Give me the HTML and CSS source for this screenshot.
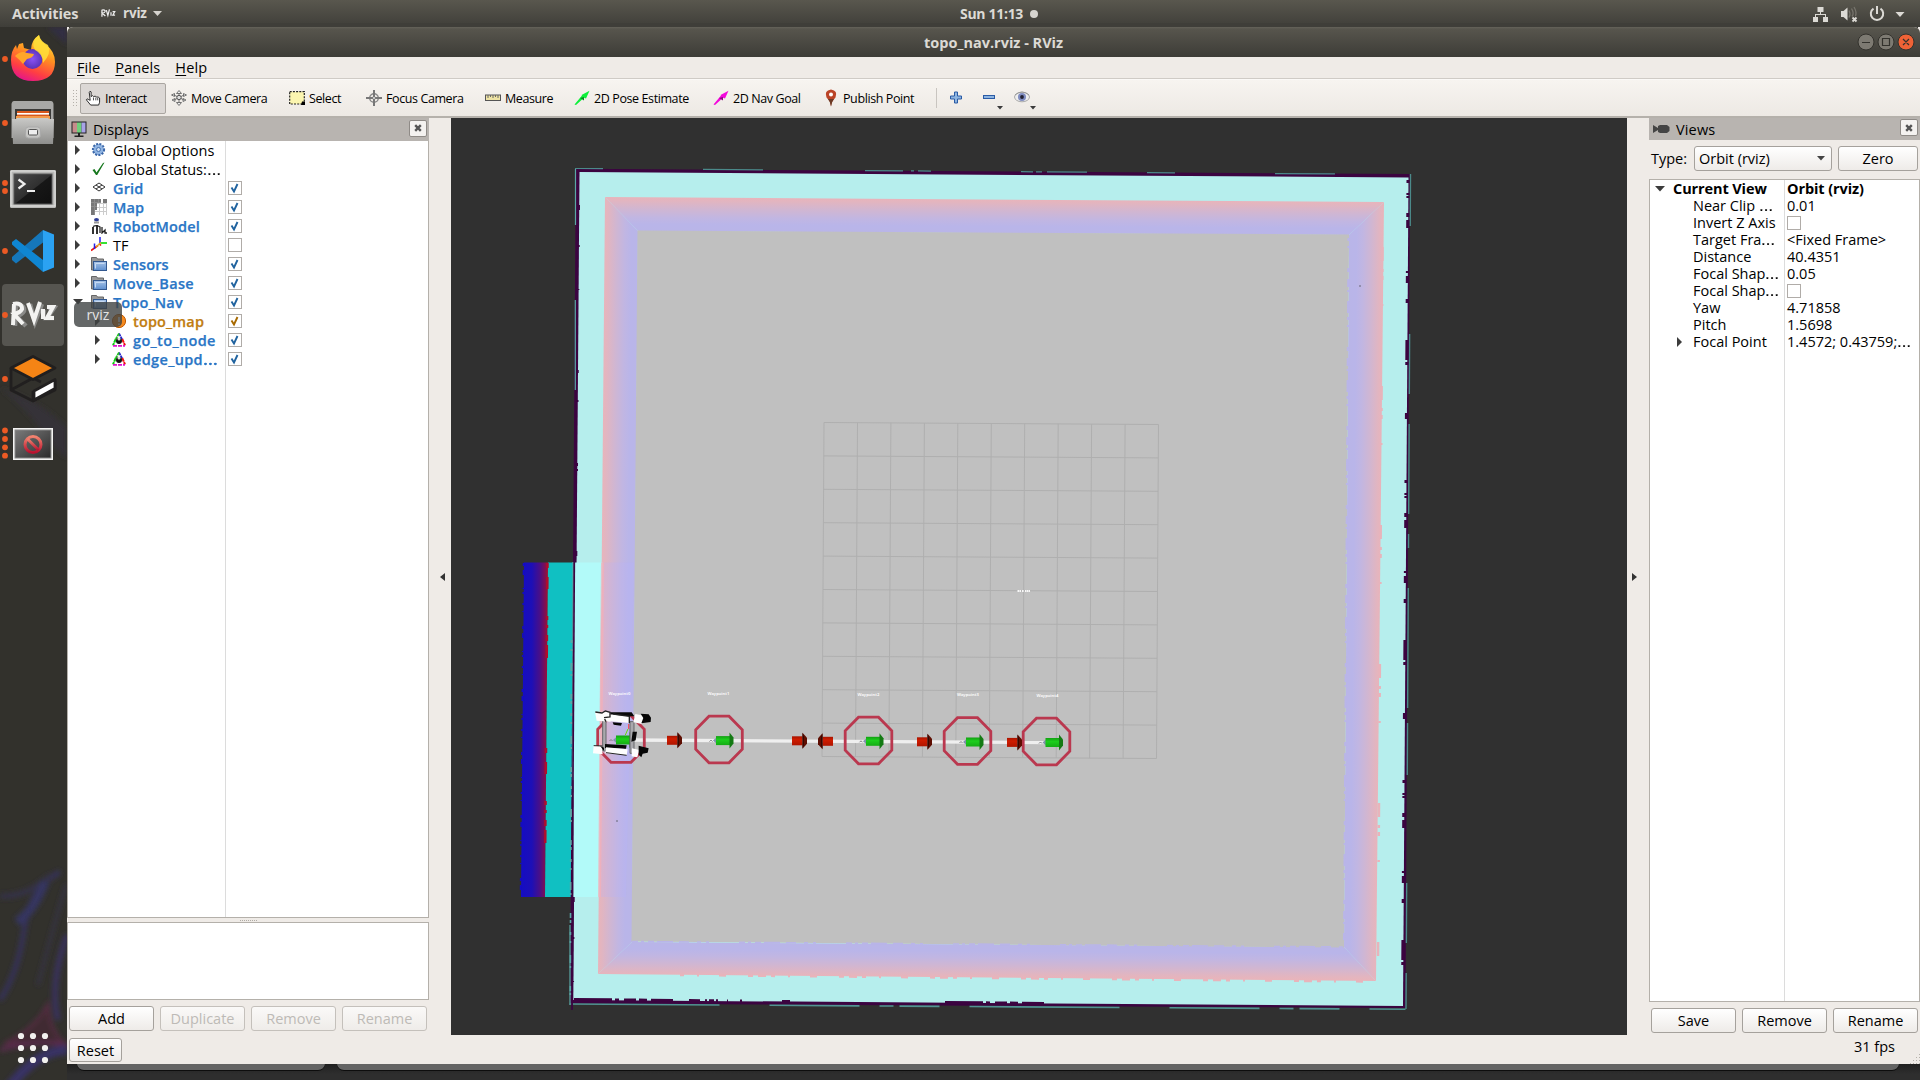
FILE: index.html
```html
<!DOCTYPE html>
<html lang="en">
<head>
<meta charset="utf-8">
<title>topo_nav.rviz - RViz</title>
<link rel="stylesheet" href="styles.css">
</head>
<body>
<svg class="defs" width="0" height="0">
  <defs>
    <linearGradient id="gFolder" x1="0" y1="0" x2="0" y2="1"><stop offset="0" stop-color="#a9c5e8"/><stop offset="1" stop-color="#5e8fcf"/></linearGradient>
    <symbol id="folder" viewBox="0 0 16 16"><path d="M.5 14V1.500h5l1 1.500h6v11z" fill="#999" stroke="#666"/><rect x="2.500" y="5.500" width="13" height="9" fill="url(#gFolder)" stroke="#33588f"/><path d="M4.500 12.500v-5h9" fill="none" stroke="#c8daf2"/></symbol>
    <symbol id="right" viewBox="0 0 6 10"><path d="M0 0l5 5-5 5z" fill="#3c3c3c"/></symbol>
    <symbol id="down" viewBox="0 0 10 6"><path d="M0 0h10L5 5.500z" fill="#3c3c3c"/></symbol>
    <symbol id="tick" viewBox="0 0 14 14"><path d="M3.500 6.500L6 10.500 9.500 3" fill="none" stroke="currentColor" stroke-width="1.900"/></symbol>
    <symbol id="marker" viewBox="0 0 14 14"><path d="M7 .5l3.200 6" stroke="#22c" stroke-width="1.800" stroke-dasharray="3 .6"/><path d="M7 .5L3.800 6" stroke="#2b2" stroke-width="1.800" stroke-dasharray="3 .6"/><path d="M3.800 6L1 12.500" stroke="#1c1" stroke-width="2" stroke-dasharray="4 .6"/><path d="M10.200 6l2.800 6.500" stroke="#e11" stroke-width="2" stroke-dasharray="4 .6"/><path d="M1 12.800h12" stroke="#d1c" stroke-width="1.800" stroke-dasharray="4 1"/><circle cx="7" cy="8" r="3" fill="#111"/><circle cx="7" cy="6" r="1.500" fill="#ddd"/></symbol>
    <symbol id="cross" viewBox="0 0 8 8"><path d="M1.200 1.200l5.600 5.600M6.800 1.200L1.200 6.800" stroke="#555" stroke-width="2.400"/></symbol>
  </defs>
</svg>

<header class="topbar">
  <span class="activities">Activities</span>
  <svg class="rv-mini" viewBox="0 0 48 30" aria-hidden="true"><g fill="none" stroke="#eee" stroke-width="4"><path d="M3 3v22M3 4q11-2 10 5-1 4-9 5l10 9M17 4l5 17 5-19M32 11v11M37 9h7l-6 11h7"/></g></svg>
  <span class="appname">rviz</span>
  <svg class="tri-top" viewBox="0 0 9 5"><path d="M0 0h9L4.500 5z" fill="#d6d3ce"/></svg>
  <span class="clock">Sun 11:13<i></i></span>
  <svg class="tray" width="100" height="18" viewBox="1810 4 100 18">
    <g fill="#dcdad5"><rect x="1817.500" y="6" width="6" height="5"/><rect x="1813" y="16" width="5" height="5"/><rect x="1823" y="16" width="5" height="5"/><path d="M1820 11h1v2h5v3h-1v-2h-9v2h-1v-3h5z"/>
    <path d="M1841 10h2.500l4-3.500v13l-4-3.500h-2.500z"/></g>
    <path d="M1849 9.500q2 3.500 0 7M1851.500 7.500q3 5 .5 8M1854 6q3 5 1.500 9" stroke="#77746c" stroke-width="1.300" fill="none"/>
    <path d="M1852.500 16.500l4 4M1856.500 16.500l-4 4" stroke="#dcdad5" stroke-width="1.800"/>
    <path d="M1873.500 7.600a6.200 6.200 0 1 0 7 0" stroke="#dcdad5" stroke-width="2" fill="none"/><path d="M1877 5v8" stroke="#dcdad5" stroke-width="2"/>
    <path d="M1895.500 11h9l-4.500 5z" fill="#dcdad5"/>
  </svg>
</header>

<div class="desktop">
<nav class="dock">
  <svg width="67" height="1053" viewBox="0 27 67 1053">
    <defs>
      <linearGradient id="ff" x1=".7" y1="0" x2=".3" y2="1"><stop offset="0" stop-color="#ffe93c"/><stop offset=".4" stop-color="#ff9320"/><stop offset=".75" stop-color="#ff3f42"/><stop offset="1" stop-color="#e3148d"/></linearGradient>
      <radialGradient id="globe"><stop offset="0" stop-color="#8a52f5"/><stop offset="1" stop-color="#5a33b8"/></radialGradient>
      <linearGradient id="steel" x1="0" y1="0" x2="0" y2="1"><stop offset="0" stop-color="#c9c9c7"/><stop offset="1" stop-color="#8e8e8c"/></linearGradient>
      <linearGradient id="scr" x1="0" y1="0" x2="1" y2="1"><stop offset="0" stop-color="#7a7a7a"/><stop offset="1" stop-color="#2b2b2b"/></linearGradient>
      <linearGradient id="term" x1="0" y1="0" x2="1" y2="1"><stop offset="0" stop-color="#4a4a4a"/><stop offset=".5" stop-color="#303030"/><stop offset=".52" stop-color="#171717"/><stop offset="1" stop-color="#101010"/></linearGradient>
      <linearGradient id="no" x1="0" y1="0" x2="0" y2="1"><stop offset="0" stop-color="#f2836f"/><stop offset="1" stop-color="#b8122f"/></linearGradient>
      <filter id="soft" x="-50%" y="-50%" width="200%" height="200%"><feGaussianBlur stdDeviation="2.500"/></filter>
    </defs>
    <g filter="url(#soft)" fill="none">
      <path d="M0 388q25 18 55 60l12 10v-30Q40 400 0 388z" fill="#343237" stroke="none"/>
      <path d="M47 27l20 18v-18z" fill="#312f42" stroke="none"/>
      <path d="M60 872q-30 15-36 58T0 1000" stroke="#35325a" stroke-width="5"/>
      <path d="M0 896q25 2 50-20" stroke="#343248" stroke-width="5"/>
      <path d="M45 882q-12 30-28 40" stroke="#343560" stroke-width="9"/>
      <path d="M66 885q-12 40-28 100" stroke="#353247" stroke-width="3"/><path d="M67 935q-18 50-9 85" stroke="#38305c" stroke-width="6"/>
      <path d="M48 1004q-14 26-44 40 30-4 63 2-18-15-19-42z" fill="#412b31" stroke="#5a2c46" stroke-width="2.500"/>
      <path d="M67 1044q-30-4-67 6" stroke="#5a2c4e" stroke-width="4"/>
      <path d="M67 1050q-30 0-60 40" stroke="#373265" stroke-width="10"/>
    </g>
    <rect x="2" y="284" width="62" height="62" rx="4" fill="#565550"/>
    <g fill="#ec5a24"><circle cx="5" cy="59" r="2.900"/><circle cx="5" cy="123" r="2.900"/><circle cx="5" cy="183" r="2.900"/><circle cx="5" cy="191" r="2.900"/><circle cx="5" cy="251" r="2.900"/><circle cx="5" cy="315" r="2.900"/><circle cx="5" cy="379" r="2.900"/><circle cx="5" cy="430.500" r="2.900"/><circle cx="5" cy="439" r="2.900"/><circle cx="5" cy="447.300" r="2.900"/><circle cx="5" cy="455.700" r="2.900"/></g>
    <!-- Firefox -->
    <path d="M39 35q1 6 6 9 10 7 10 18 0 19-22 19T11 60q0-9 5-15l1 4 2-5 4-1 1 5 7 2q0-10 8-15z" fill="url(#ff)"/>
    <circle cx="32.500" cy="59" r="10" fill="url(#globe)"/>
    <path d="M15 56q6-6 12-3l7 1q-1 4-7 5l-4 5q-4-5-8-8z" fill="#ffa62a"/>
    <path d="M39 35q-9 7-4 15 8 4 8 13 9-10 5-18-8-4-9-10z" fill="#ffdf3a" opacity=".85"/>
    <!-- Files -->
    <path d="M14 101h37q2 0 2.500 3v34h-42v-34q.5-3 2.500-3z" fill="#a8a8a6"/>
    <rect x="15" y="109" width="36" height="12" fill="#3b3a38"/><path d="M17 111h32v7H17z" fill="#d8571c"/><path d="M17 113h32v1.600H17z" fill="#fff"/><path d="M16 116h34v3H16z" fill="#f39a4a"/>
    <path d="M12 119h4l1-1h31l1 1h5l-1 25H13z" fill="url(#steel)"/>
    <rect x="25.500" y="127" width="15" height="11" rx="3" fill="#c6c6c4" stroke="#aaa"/><rect x="28.500" y="129.500" width="9" height="5.500" rx="1" fill="#eee" stroke="#555"/>
    <!-- Terminal -->
    <rect x="10" y="170" width="46" height="38" rx="1.500" fill="#b8b8b6"/><rect x="11" y="171" width="44" height="35" fill="none" stroke="#e4e4e2"/><rect x="14" y="174" width="38" height="30" fill="url(#term)" stroke="#555"/>
    <path d="M18.500 179.500l6 4.500-6 4.500" stroke="#eee" stroke-width="2.200" fill="none"/><path d="M27 191h8" stroke="#eee" stroke-width="2"/>
    <!-- VS Code -->
    <path d="M12 260l4 3.500 27-21V230L12 257z" fill="#1577bb"/><path d="M12 242l4-3 27 21v12L12 244.500z" fill="#0f86d3"/>
    <path d="M43 230l11 4.500v33L43 272z" fill="#2ba2f2"/>
    <!-- RViz -->
    <g fill="none" stroke="#8a8a88" stroke-width="4.500"><path d="M16 306l-1 20M15 305q10-1 9 6-2 4-8 5l10 10M30 304l5 18 7-18M44 310l-1 9M48 308h6l-7 10h7"/></g>
    <g fill="none" stroke="#f3f3f1" stroke-width="4"><path d="M14 304l-1 21M13 304q9-2 9 5-2 4-8 5l9 10M28 303l6 17 6-18M43 309v10M47 307h6l-6 11h7"/></g>
    <!-- Gazebo -->
    <g stroke="#211f1f" stroke-width="2.800" stroke-linejoin="round"><path d="M11 368v22l22 11 22-11v-10M11 390l22-12 8 4M33 401v-10" fill="none"/><path d="M11 368l22-11.500L55 368l-22 11.500z" fill="#f58415"/><path d="M34 391l21-11.500v9L34 400z" fill="#fff"/></g>
    <!-- Display blocked -->
    <rect x="13" y="428" width="40" height="32" fill="#f4f4f3"/><rect x="15" y="430" width="36" height="28" fill="url(#scr)" stroke="#888"/><g fill="none" stroke="url(#no)" stroke-width="3"><circle cx="33" cy="444.500" r="8"/><path d="M27.500 439l11 11"/></g>
    <g fill="#f2f1ef"><circle cx="21" cy="1036" r="3.100"/><circle cx="33" cy="1036" r="3.100"/><circle cx="45" cy="1036" r="3.100"/><circle cx="21" cy="1048" r="3.100"/><circle cx="33" cy="1048" r="3.100"/><circle cx="45" cy="1048" r="3.100"/><circle cx="21" cy="1060" r="3.100"/><circle cx="33" cy="1060" r="3.100"/><circle cx="45" cy="1060" r="3.100"/></g>
  </svg>
</nav>

<div class="stage">
<main class="window">
  <div class="titlebar"><span class="title">topo_nav.rviz - RViz</span>
    <svg class="winbtns" width="58" height="20" viewBox="1857 32 58 20"><g fill="#7d7a72" stroke="#33322d"><circle cx="1866" cy="42" r="8"/><circle cx="1886" cy="42" r="8"/><circle cx="1906" cy="42" r="8" fill="#ef6236"/></g><path d="M1862 42.500h8M1882.500 38.500h7v7h-7zM1903 39l6 6M1909 39l-6 6" fill="none" stroke="#33322d" stroke-width="1.200"/></svg>
  </div>
  <div class="menubar"><span><u>F</u>ile</span><span><u>P</u>anels</span><span><u>H</u>elp</span></div>
  <div class="toolbar">
    <i class="grip"></i>
    <div class="tool active t1"><svg viewBox="0 0 16 17"><path d="M5 11L4 2.500Q4.500.5 6 2v5l1.500-1 1 1 2-.5 1 1 2 0 1.500 1V13l-1 3H5.500L1 10.500q.5-2 2-.5z" fill="#fff" stroke="#222"/><path d="M8.500 8v3M11 8v3M13 8.500V11" stroke="#333" stroke-width=".9"/></svg><span>Interact</span></div>
    <div class="tool t2"><svg viewBox="0 0 16 16"><path d="M8 .5l2.500 3h-5zM8 15.500l2.500-3h-5zM.5 5l3-1.500v3zM15.500 5l-3-1.500v3zM1 10l3-1.500v3zM15 10l-3-1.500v3zM8 3v10M3 5l10 5M13 5L3 10" fill="#eee" stroke="#666" stroke-width=".9"/><circle cx="8" cy="7.500" r="2.200" fill="#ddd" stroke="#555"/></svg><span>Move Camera</span></div>
    <div class="tool t3"><svg viewBox="0 0 16 14"><rect x=".7" y=".7" width="14.600" height="12.300" fill="#fbf5b0" stroke="#222" stroke-width="1.200" stroke-dasharray="2 1.200"/><path d="M13 10.500h3V14h-4z"/></svg><span>Select</span></div>
    <div class="tool t4"><svg viewBox="0 0 16 16"><circle cx="8" cy="8" r="4.300" fill="none" stroke="#888" stroke-width="1.400"/><path d="M8 0v6M8 10v6M0 8h6M10 8h6" stroke="#777" stroke-width="2"/><circle cx="8" cy="8" r="1.500" fill="#eee" stroke="#666"/></svg><span>Focus Camera</span></div>
    <div class="tool t5"><svg viewBox="0 0 16 16"><rect x=".5" y="5" width="15" height="5.500" fill="#eee3a4" stroke="#555"/><path d="M3 5v3M5.500 5v2M8 5v3M10.500 5v2M13 5v3" stroke="#666"/></svg><span>Measure</span></div>
    <div class="tool t6"><svg viewBox="0 0 16 16"><path d="M.5 14.500L8 5.500l-.5-.5L15.500.8 12 8.500l-2-.8L2 15z" fill="#0ef03a"/><path d="M6 8l4 2.500V7z" fill="#0a8a24"/></svg><span>2D Pose Estimate</span></div>
    <div class="tool t7"><svg viewBox="0 0 16 16"><path d="M.5 14.500L8 5.500l-.5-.5L15.500.8 12 8.500l-2-.8L2 15z" fill="#f407dc"/><path d="M6 8l4 2.500V7z" fill="#8c0a80"/></svg><span>2D Nav Goal</span></div>
    <div class="tool t8"><svg viewBox="0 0 16 18"><path d="M8 17.500Q7.500 12 3.500 8.500.8 1.500 8 .5q7.200 1 4.500 8Q8.500 12 8 17.500z" fill="#bb4427"/><path d="M8 17.500Q7.500 13 5 10h6Q8.500 13 8 17.500z" fill="#6b3a25"/><circle cx="8" cy="5.500" r="2" fill="#fff"/></svg><span>Publish Point</span></div>
    <i class="sep"></i>
    <svg class="extras" width="100" height="26" viewBox="945 86 100 26">
      <path d="M954.500 93h3v4h4v3h-4v4h-3v-4h-4v-3h4z" fill="#8db4e0" stroke="#2a5ba5"/>
      <rect x="983.500" y="96.500" width="11" height="3" fill="#8db4e0" stroke="#2a5ba5"/>
      <path d="M997 107h6l-3 3.500zM1030 107h6l-3 3.500z" fill="#3b3b3b"/>
      <ellipse cx="1022" cy="98" rx="7.500" ry="4.800" fill="#eee" stroke="#aaa"/><circle cx="1022" cy="98" r="4" fill="#7f8cc0"/><circle cx="1022" cy="98" r="1.900" fill="#223"/><path d="M1015 96q7-6 14 0" fill="none" stroke="#999"/>
    </svg>
  </div>

  <div class="content">
    <section class="displays">
      <div class="dockhead"><svg width="16" height="17" viewBox="0 0 16 17"><rect x=".5" y=".5" width="15" height="12" fill="#222"/><path d="M1.500 1.500h4.500v10H1.500z" fill="#c58c8c"/><path d="M6 1.500h4.500v10H6z" fill="#6fcf7b"/><path d="M10.500 1.500h4v10h-4z" fill="#a8a2e8"/><path d="M7 12h2v2.500h3.500V16h-9v-1.500H7z" fill="#222"/></svg><span class="dtitle">Displays</span><b class="close"><svg width="8" height="8"><use href="#cross"/></svg></b></div>
      <div class="tree">
        <div class="row"><svg class="ar"><use href="#right"/></svg><svg class="ic" viewBox="0 0 16 16"><circle cx="7.500" cy="7.500" r="5.400" fill="#86aede" stroke="#3a66a8" stroke-width="2.400" stroke-dasharray="2 1.200"/><circle cx="7.500" cy="7.500" r="4.600" fill="#90b4e2"/><circle cx="7.500" cy="7.500" r="2" fill="#cfe0f4" stroke="#4672b0"/></svg><span>Global Options</span></div>
        <div class="row"><svg class="ar"><use href="#right"/></svg><svg class="ic" viewBox="0 0 16 16"><path d="M1.500 9l2-1 2 3.500L12 2l1.500-.5L6.200 14H5z" fill="#15771d"/></svg><span>Global Status:<q>…</q></span></div>
        <div class="row on"><svg class="ar"><use href="#right"/></svg><svg class="ic" viewBox="0 0 16 16"><path d="M8 3l6 4-6 4-6-4zM5 5l6 4M11 5L5 9" fill="none" stroke="#333"/></svg><span>Grid</span><b class="cb"><svg><use href="#tick"/></svg></b></div>
        <div class="row on"><svg class="ar"><use href="#right"/></svg><svg class="ic" viewBox="0 0 16 16"><path d="M0 0h10v4H6v7H4v5H0z" fill="#777"/><path d="M12 0h4v5h-4z" fill="#777"/><path d="M6 4.500h10M6 8.500h10M4 12.500h12M8.500 4v12M12.500 4v12M15.500 4v12" stroke="#ccc" fill="none"/><path d="M0 3.500h10M0 7.500h6M3.500 0v16M7.500 0v4" stroke="#8c8c8c"/></svg><span>Map</span><b class="cb"><svg><use href="#tick"/></svg></b></div>
        <div class="row on"><svg class="ar"><use href="#right"/></svg><svg class="ic" viewBox="0 0 16 16"><ellipse cx="5.500" cy="1.700" rx="2.500" ry="1.700" fill="#2e3c94"/><path d="M3 3.500h5v2H3z" fill="#999"/><path d="M1 9h2v7H1zM5 7h2v9H5z" fill="#333"/><path d="M2 8.500q4-2 7 .5v6M11 9v6l3-3v3h2" fill="none" stroke="#222" stroke-width="1.300"/></svg><span>RobotModel</span><b class="cb"><svg><use href="#tick"/></svg></b></div>
        <div class="row"><svg class="ar"><use href="#right"/></svg><svg class="ic" viewBox="0 0 16 16"><path d="M0 13.500L7 8.500M8 6.500l2 2" stroke="#e11" stroke-width="1.700"/><path d="M9 0v6M3.500 6.500V12" stroke="#22e" stroke-width="1.500"/><path d="M9.500 6H16" stroke="#1d1" stroke-width="1.700"/><path d="M5 10l5-4.500" stroke="#da2" stroke-width="1.400"/></svg><span>TF</span><b class="cb"></b></div>
        <div class="row on"><svg class="ar"><use href="#right"/></svg><svg class="ic"><use href="#folder"/></svg><span>Sensors</span><b class="cb"><svg><use href="#tick"/></svg></b></div>
        <div class="row on"><svg class="ar"><use href="#right"/></svg><svg class="ic"><use href="#folder"/></svg><span class="wide">Move_Base</span><b class="cb"><svg><use href="#tick"/></svg></b></div>
        <div class="row on"><svg class="ar dn"><use href="#down"/></svg><svg class="ic"><use href="#folder"/></svg><span>Topo_Nav</span><b class="cb"><svg><use href="#tick"/></svg></b></div>
        <div class="row on sub warn"><svg class="ar"><use href="#right"/></svg><svg class="ic" viewBox="0 0 14 14"><circle cx="7" cy="7" r="6.600" fill="#f58a1f" stroke="#c05a00"/><path d="M7 3v5M7 9.500V11" stroke="#fff" stroke-width="2"/></svg><span>topo_map</span><b class="cb"><svg><use href="#tick"/></svg></b></div>
        <div class="row on sub"><svg class="ar"><use href="#right"/></svg><svg class="ic"><use href="#marker"/></svg><span class="wide">go_to_node</span><b class="cb"><svg><use href="#tick"/></svg></b></div>
        <div class="row on sub"><svg class="ar"><use href="#right"/></svg><svg class="ic"><use href="#marker"/></svg><span class="wide">edge_upd<q>…</q></span><b class="cb"><svg><use href="#tick"/></svg></b></div>
      </div>
      <div class="split"><i></i></div>
      <div class="desc"></div>
      <div class="btnrow"><button>Add</button><button disabled>Duplicate</button><button disabled>Remove</button><button disabled>Rename</button></div>
    </section>
    <div class="gutter"><svg width="5" height="8" viewBox="0 0 5 8"><path d="M5 0v8L0 4z" fill="#333"/></svg></div>

    <svg class="view" width="1176" height="917" viewBox="451 118 1176 917">
      <defs>
        <linearGradient id="wl" gradientUnits="userSpaceOnUse" x1="601.500" y1="585" x2="635" y2="585.300"><stop offset="0" stop-color="#e8b4bb"/><stop offset=".1" stop-color="#e2b5c0"/><stop offset=".35" stop-color="#d0b6d2"/><stop offset=".6" stop-color="#c1b6e2"/><stop offset=".8" stop-color="#b9b5e9"/><stop offset="1" stop-color="#b9b5e8"/></linearGradient>
        <linearGradient id="wt" x1="994" y1="199.500" x2="993.800" y2="233" href="#wl"/>
        <linearGradient id="wr" x1="1380" y1="591.500" x2="1346.500" y2="591.200" href="#wl"/>
        <linearGradient id="wb" x1="987" y1="977.500" x2="987.200" y2="944.500" href="#wl"/>
        <linearGradient id="cost" x1="0" x2="1" y1="0" y2="0"><stop offset="0" stop-color="#140cc4"/><stop offset=".4" stop-color="#1d0fb6"/><stop offset=".7" stop-color="#4a0f86"/><stop offset=".9" stop-color="#800f50"/><stop offset="1" stop-color="#ae0c2c"/></linearGradient>
        <linearGradient id="red" x1="0" y1="0" x2="0" y2="1"><stop offset="0" stop-color="#a81400"/><stop offset=".35" stop-color="#cf1c00"/><stop offset="1" stop-color="#b01500"/></linearGradient>
        <linearGradient id="grn" x1="0" y1="0" x2="0" y2="1"><stop offset="0" stop-color="#12a012"/><stop offset=".4" stop-color="#1dce1d"/><stop offset="1" stop-color="#15ac15"/></linearGradient>
        <g id="ra"><rect x="0" y="-4.500" width="10.500" height="9" fill="url(#red)"/><path d="M10.500-8v16l4.500-5v-6z" fill="#5e0e02"/><path d="M10.500-8l1.500 4v8l-1.500 4z" fill="#350600"/></g>
        <g id="ga"><path d="M-7.500 1l1.500-1.500 1.500 1.500" fill="none" stroke="#777" stroke-width=".9"/><path d="M-4 0l4-3.500v7z" fill="#8292ad"/><rect x="-1" y="-4.500" width="14" height="9" fill="url(#grn)"/><path d="M12.500-8v16l4-5v-6z" fill="#147a14"/></g>
        <path id="oct" d="M-10-23.300h20l13.300 13.500v19.600L10 23.300h-20l-13.300-13.500v-19.600z" fill="none" stroke="#ba384f" stroke-width="2.800"/>
      </defs>
      <rect x="451" y="118" width="1176" height="917" fill="#303030"/>
      <!-- local costmap outside the map -->
      <path d="M524 562.500h24L545 897h-24z" fill="url(#cost)"/>
      <path d="M548 562.500h26L571 897h-26z" fill="#10c0c2"/>
      <path d="M547.500 563L544.800 897" stroke="#b00c2c" stroke-width="2.500" stroke-dasharray="5 9 12 27 4 5 3 7 6 4 13 90"/>
      <path d="M523.500 563L520.500 897" stroke="#140cc4" stroke-width="1.500" stroke-dasharray="3 4 5 13 1 3 2 9 2 6 1 14"/>
      <!-- static map walls -->
      <path d="M575.800 168.800L1410 174l-4.500 834L570 1003.500z" fill="#3b0440"/>
      <path d="M579.500 172L1408.500 177.500 1403 1006 573.300 1000z" fill="#b6eeed"/>
      <path d="M575.500 169v56M575.300 300v90M573 562v340M570 925v80" stroke="#5aa7a6" stroke-width="1.200" fill="none"/>
      <path d="M575 168.500L1410 174.500" stroke="#4b8a8a" stroke-width="1.200" stroke-dasharray="28 100 60 102 38 8 3 4 13 90 12 3 6 5 40 60"/>
      <path d="M1410.500 174L1406 1009" stroke="#4b8a8a" stroke-width="1.400" stroke-dasharray="52 108 60 30 90 20 14 40 120 15"/>
      <path d="M569.500 1004L1405.500 1009.300" stroke="#519392" stroke-width="1.600" stroke-dasharray="150 50 90 20 14 6 40 30"/>
      <path d="M1408 180L1402.500 1004" stroke="#3b0440" stroke-width="3" stroke-dasharray="3 10 2 1 2 15 4 3 8 43 2 3 7 16 4 37 20 2 3 48 6 61"/>
      <path d="M574 999.500L790 1001.500M945 1002.500l110 1" stroke="#3b0440" stroke-width="3" stroke-dasharray="38 3 4 5 12 3 8 4 22 16 11 5 2 2 5 2 2 9 1 12 2 40"/>
      <path d="M579 205L573 990" stroke="#3b0440" stroke-width="2" stroke-dasharray="5 35 2 42 1 80 3 27 2 61 3 3 2 80"/>
      <path d="M571.500 640L570.500 995" stroke="#5aa7a6" stroke-width="2" stroke-dasharray="3 6 2 12 8 3 2 18 5 2 3 9"/>
      <path d="M605 197L638 231 632 942 598 974z" fill="url(#wl)"/>
      <path d="M605 197L1384 202 1349 235 638 231z" fill="url(#wt)"/>
      <path d="M1384 202L1376 981 1344 947 1349 235z" fill="url(#wr)"/>
      <path d="M598 974L1376 981 1344 947 632 942z" fill="url(#wb)"/>
      <path d="M637.500 230.500L1349 234.500 1344 947.500 631.500 941.500z" fill="#c0c0c0"/>
      <path d="M1348.500 238L1344 940" stroke="#b9b5e8" stroke-width="2" stroke-dasharray="3 5 2 20 4 7 8 3 2 9 12 4"/>
      <path d="M632 941.500L1344 947" stroke="#b9b5e8" stroke-width="1.600" stroke-dasharray="6 3 3 4 6 3 16 6 10 8 4 5 3 30"/>
      <path d="M680 975L1370 981.500" stroke="#e8b4bb" stroke-width="2.500" stroke-dasharray="4 13 2 20 7 22 5 5 8 5"/>
      <path d="M1382.500 247L1378 960" stroke="#e8b4bb" stroke-width="2.500" stroke-dasharray="14 8 3 4 4 24 2 80"/>
      <!-- local costmap laid over the wall -->
      <path d="M574 562.500h28.500L600 660 599.300 897H572z" fill="#b2faf9"/>
      <path d="M602.500 562.500H634L626 897h-26.700L600 660z" fill="#b8b0ff" opacity=".22"/>
      <path d="M602.500 562.500L599.500 897" stroke="#f6b0b8" stroke-width="3" opacity=".7"/>
      <path d="M574.500 540L573 780" stroke="#3b0440" stroke-width="1.600"/><path d="M573 780l-1 230" stroke="#3b0440" stroke-width="1.800"/>
      <path d="M1360 285v2M616 821h2" stroke="#667" fill="none"/>
      <!-- grid -->
      <g stroke="#afafaf" fill="none" stroke-width="1">
        <path d="M824 422.500L1158.500 424.500M823.800 455.900L1158.300 457.900M823.600 489.300L1158.100 491.300M823.400 522.700L1157.900 524.700M823.200 556.100L1157.700 558.100M823 589.500L1157.500 591.500M822.800 622.900L1157.300 624.900M822.600 656.300L1157.100 658.300M822.400 689.700L1156.900 691.700M822.200 723.100L1156.700 725.100M822 756.500L1156.500 758.500"/>
        <path d="M824 422.500L822 756.500M857.500 422.700L855.500 756.700M890.900 422.900L888.900 756.900M924.400 423.100L922.400 757.100M957.800 423.300L955.800 757.300M991.300 423.500L989.300 757.500M1024.700 423.700L1022.700 757.700M1058.200 423.900L1056.200 757.900M1091.600 424.100L1089.600 758.100M1125.100 424.300L1123.100 758.300M1158.500 424.500L1156.500 758.500"/>
      </g>
      <path d="M1017.500 591h3.500M1022 591h2M1025 591h5" stroke="#f8f8f8" stroke-width="2" stroke-dasharray="1.600 .4"/>
      <!-- topological map -->
      <path d="M630 740L1052 742.500" stroke="#efefef" stroke-width="3.300"/>
      <use href="#oct" x="621" y="739"/><use href="#oct" x="719" y="739.500"/><use href="#oct" x="868.500" y="740.500"/><use href="#oct" x="967.500" y="741"/><use href="#oct" x="1046.500" y="741.500"/>
      <use href="#ra" x="667" y="740.300"/><use href="#ra" x="792" y="740.800"/><use href="#ra" transform="translate(833 741.300) scale(-1 1)"/><use href="#ra" x="917" y="741.800"/><use href="#ra" x="1007" y="742.400"/>
      <use href="#ga" x="717" y="740.600"/><use href="#ga" x="867" y="741.300"/><use href="#ga" x="967" y="742"/><use href="#ga" x="1046.500" y="742.500"/>
      <g class="wp"><text x="608.500" y="694.500">Waypoint0</text><text x="707.500" y="695">Waypoint1</text><text x="857.500" y="696">Waypoint2</text><text x="957" y="696">Waypoint3</text><text x="1036.500" y="697">Waypoint4</text></g>
      <!-- robot -->
      <use href="#ga" x="617" y="740"/>
      <g transform="translate(500 540) scale(.3333)">
        <path d="M308 535h10v98h-10zM390 545h12v95h-12z" fill="#a9a9ad" stroke="#66666a" stroke-width="3"/>
        <path d="M330 517h65l8 12h-70zM398 575l13 0-4 26-13 4zM315 612l65 4-2 10-63-2z" fill="#080808"/>
        <path d="M285 515l44 2 3 28-42-3zM328 523l60 6v20l-64-6zM406 522l26 5-6 25-26-5z" fill="#fdfdfd"/>
        <path d="M286 516l20 3 10-6 14 4v14l-18 2M340 522l48 7v20M318 545l-4-8" fill="none" stroke="#222" stroke-width="4"/>
        <path d="M422 521l24 2 7 10-1 13-28 4 6-16zM338 547l28 2-3 8-22-3z" fill="#060606"/>
        <path d="M281 617l24 2 3 24-29-3zM318 622l65 6-3 18-64-6zM396 625l22 5-6 22-17-3z" fill="#fdfdfd"/>
        <path d="M416 617l30 8-3 13-15 3-4 11-8-8zM300 617l12 6v10" fill="#060606"/>
        <path d="M318 638l62 8M281 617l26 1" stroke="#222" stroke-width="3"/>
        <path d="M386 552v15" stroke="#f44" stroke-width="3"/><path d="M384 567l-8 18" stroke="#6d0" stroke-width="3"/>
      </g>
    </svg>

    <div class="gutter r"><svg width="5" height="8" viewBox="0 0 5 8"><path d="M0 0v8l5-4z" fill="#333"/></svg></div>
    <section class="views">
      <div class="dockhead"><svg width="17" height="10" viewBox="0 0 17 10"><path d="M0 1l5 3V2l2-1h7l2.500 2v4L14 9H7L5 8V6L0 9z" fill="#444"/></svg><span class="vtitle">Views</span><b class="close"><svg width="8" height="8"><use href="#cross"/></svg></b></div>
      <div class="typerow"><span>Type:</span><div class="combo">Orbit (rviz)<svg width="8" height="5"><path d="M0 0h8L4 4.500z" fill="#444"/></svg></div><button>Zero</button></div>
      <div class="props">
        <div class="p head"><svg class="par" viewBox="0 0 10 6"><use href="#down"/></svg><span>Current View</span><em>Orbit (rviz)</em></div>
        <div class="p"><span>Near Clip <q>…</q></span><em>0.01</em></div>
        <div class="p"><span>Invert Z Axis</span><em><b class="cb"></b></em></div>
        <div class="p"><span>Target Fra<q>…</q></span><em>&lt;Fixed Frame&gt;</em></div>
        <div class="p"><span>Distance</span><em>40.4351</em></div>
        <div class="p"><span>Focal Shap<q>…</q></span><em>0.05</em></div>
        <div class="p"><span>Focal Shap<q>…</q></span><em><b class="cb"></b></em></div>
        <div class="p"><span>Yaw</span><em>4.71858</em></div>
        <div class="p"><span>Pitch</span><em>1.5698</em></div>
        <div class="p fp"><svg class="par" viewBox="0 0 6 10"><use href="#right"/></svg><span>Focal Point</span><em>1.4572; 0.43759;<q>…</q></em></div>
      </div>
      <div class="btnrow"><button>Save</button><button>Remove</button><button>Rename</button></div>
    </section>
  </div>
  <footer class="status"><button>Reset</button><span>31 fps</span><i class="sizegrip"></i></footer>
</main>
<div class="behind"><i class="b1"></i><i class="b2"></i></div>
</div>
</div>
<div class="tip">rviz</div>
</body>
</html>
```
FILE: styles.css
```css
* { box-sizing: border-box; }
body { margin: 0; width: 1920px; height: 1080px; overflow: hidden; display: flex; flex-direction: column; background: #2c2c2c; font: 14.5px/17px "Open Sans", "Noto Sans", sans-serif; letter-spacing: 0; color: #000; }
svg { display: block; flex: none; }
i { font-style: normal; }
q { quotes: none; display: inline-block; transform: scaleX(1.25); transform-origin: 0 50%; }
q::before, q::after { content: none; }
.defs { position: absolute; }

.topbar { height: 27px; flex: none; display: flex; align-items: center; background: linear-gradient(#59574e, #3f3e39); color: #dcdad5; font-weight: 700; font-size: 14.5px; }
.activities { margin-left: 12px; width: 89px; letter-spacing: -0.1px; }
.rv-mini { width: 15px; height: 11px; margin-right: 7px; }
.appname { width: 30px; font-size: 13.5px; letter-spacing: -0.2px; }
.tri-top { width: 9px; height: 5px; }
.clock { display: flex; align-items: center; margin-left: 798px; width: 90px; font-size: 14px; letter-spacing: -0.3px; white-space: nowrap; }
.clock i { width: 8px; height: 8px; border-radius: 50%; background: #d6d4cf; margin-left: 7px; }
.tray { margin-left: auto; margin-right: 10px; }

.desktop { flex: 1; display: flex; min-height: 0; }
.dock { width: 67px; flex: none; background: #32312c; }
.stage { flex: 1; display: flex; flex-direction: column; min-width: 0; }
.window { height: 1037px; flex: none; display: flex; flex-direction: column; background: #efebe7; }
.titlebar { height: 30px; flex: none; display: flex; align-items: center; justify-content: flex-end; background: linear-gradient(#65635a, #57554d 2px, #3d3c37); border-radius: 6px 6px 0 0; color: #dcdad5; font-weight: 700; font-size: 14.5px; letter-spacing: 0; box-shadow: 0 -6px 0 -2px #3f3e39; }
.title { width: 140px; white-space: nowrap; margin-right: 793px; }
.winbtns { margin-right: 5px; }
.menubar { height: 22px; flex: none; display: flex; align-items: center; padding-left: 10px; gap: 15px; border-bottom: 1px solid #cfcbc6; letter-spacing: 0.1px; }
.menubar u { text-underline-offset: 2px; }
.toolbar { height: 39px; flex: none; display: flex; align-items: center; background: linear-gradient(#f7f4f0, #ede9e4); border-bottom: 2px solid #b5b1ab; border-top: 1px solid #fbf9f7; font-size: 12.5px; letter-spacing: -0.4px; white-space: nowrap; }
.grip { width: 6px; height: 18px; margin: 0 2px 0 5px; background: radial-gradient(circle, #b5b1ab 0.8px, transparent 1px) 0 0 / 3px 3px; }
.tool { height: 31px; display: flex; align-items: center; gap: 4px; padding-left: 5px; flex: none; }
.tool svg { width: 16px; height: 16px; }
.active { background: #dcd8d5; border: 1px solid #aaa6a1; border-radius: 2px; padding-left: 4px; }
.t1 { width: 86px; }
.t2 { width: 118px; }
.t3 { width: 77px; }
.t4 { width: 119px; }
.t5 { width: 89px; }
.t6 { width: 139px; }
.t7 { width: 110px; }
.t8 { width: 118px; }
.t8 svg { height: 18px; }
.sep { width: 1px; height: 20px; background: #c9c5c0; }
.extras { margin-left: 8px; }

.content { height: 918px; flex: none; display: flex; }
.displays { width: 362px; display: flex; flex-direction: column; }
.dockhead { height: 23px; flex: none; display: flex; align-items: center; background: #b8b4b0; padding: 0 2px 0 4px; }
.dtitle { margin-left: 6px; }
.vtitle { margin-left: 6px; letter-spacing: 0.15px; }
.close { width: 18px; height: 17px; margin: 0 0 3px auto; border: 1px solid #8f8b87; border-radius: 2px; background: #f4f2f0; display: flex; align-items: center; justify-content: center; }
.tree { height: 777px; flex: none; border: 1px solid #b4b0aa; border-top: 0; background: linear-gradient(90deg, transparent 157px, #dcdcdc 157px, #dcdcdc 158px, transparent 158px), #fff; }
.row { height: 19px; display: flex; align-items: center; padding: 0 0 1px 7px; white-space: nowrap; letter-spacing: 0.05px; }
.row .ar { width: 6px; height: 10px; margin-right: 10px; }
.row .ar.dn { width: 10px; height: 6px; margin: 0 8px 0 -2px; }
.row .ic { width: 16px; height: 16px; margin-right: 6px; }
.row span { width: 115px; flex: none; }
.row.on span { font-weight: 600; color: #2a76c6; -webkit-text-stroke: 0.25px #2a76c6; letter-spacing: 0.15px; }
.row.on span.wide { letter-spacing: 0.35px; }
.row.sub { padding-left: 27px; }
.row.sub .ar { margin-right: 11px; }
.row.sub .ic { width: 14px; height: 14px; margin-right: 7px; }
.row.sub span { width: 95px; }
.row.warn span { color: #c17d11; -webkit-text-stroke: 0.25px #c17d11; }
.cb { width: 14px; height: 14px; background: #fff; border: 1px solid #b0aca8; display: block; flex: none; color: #20639f; }
.cb svg { width: 14px; height: 14px; margin: -1px; }
.warn .cb { color: #a86a00; }
.split { height: 4px; flex: none; display: flex; justify-content: center; align-items: center; }
.split i { width: 17px; border-top: 1px dotted #b0aca6; }
.desc { height: 78px; flex: none; background: #fff; border: 1px solid #b4b0aa; }
.btnrow { display: flex; gap: 6px; padding: 6px 2px 0; }
button { font: inherit; letter-spacing: inherit; color: #000; width: 85px; height: 25px; flex: none; padding: 0; border: 1px solid #a5a19c; border-radius: 3px; background: linear-gradient(#fff, #eeebe8); }
button:disabled { color: #bdbab6; border-color: #c4c0bb; background: linear-gradient(#faf9f8, #efece9); }
.gutter { width: 22px; display: flex; align-items: center; padding-left: 11px; padding-bottom: 1px; }
.gutter.r { width: 22px; padding-left: 5px; }
.views { width: 271px; display: flex; flex-direction: column; }
.views .dockhead { height: 22px; }
.typerow { display: flex; align-items: center; padding: 6px 2px 8px; height: 39px; }
.typerow span { width: 43px; }
.combo { width: 138px; height: 25px; margin-right: 6px; padding: 0 6px 0 4px; border: 1px solid #a5a19c; border-radius: 3px; background: linear-gradient(#fff, #eeebe8); display: flex; align-items: center; justify-content: space-between; }
.typerow button { width: 80px; }
.props { height: 823px; flex: none; border: 1px solid #b4b0aa; background: linear-gradient(90deg, transparent 134px, #dcdcdc 134px, #dcdcdc 135px, transparent 135px), #fff; }
.p { height: 17px; display: flex; align-items: center; padding-left: 43px; white-space: nowrap; }
.p span { width: 94px; flex: none; }
.p em { font-style: normal; }
.p.head { height: 17px; padding-left: 5px; font-weight: 700; font-size: 14.5px; letter-spacing: -0.1px; }
.p.head span { width: 114px; }
.p.head .par { width: 10px; height: 6px; margin-right: 8px; }
.p.fp { padding-left: 27px; }
.fp .par { width: 6px; height: 10px; margin-right: 10px; }
.status { flex: 1; display: flex; align-items: flex-start; padding: 2px 0 0 2px; }
.status button { width: 53px; height: 24px; }
.status span { margin-left: auto; width: 42px; white-space: nowrap; margin-right: 13px; }
.sizegrip { width: 11px; height: 11px; align-self: flex-end; background: radial-gradient(circle, #b5b1ab 0.8px, transparent 1px) 0 0 / 3px 3px; clip-path: polygon(100% 0, 100% 100%, 0 100%); }
.wp text { font: 600 4.2px "Noto Sans", sans-serif; fill: #fff; }

.behind { flex: 1; display: flex; background: linear-gradient(#202020, #2e2e2e 10px); }
.behind i { height: 7px; background: #646464; border-bottom: 1px solid #0d0d0d; border-radius: 0 0 8px 8px; }
.b1 { width: 248px; margin-left: 10px; }
.b2 { width: 1562px; margin-left: 12px; }

.tip { position: absolute; left: 74px; top: 302px; width: 48px; height: 25px; border-radius: 5px; background: rgba(62, 66, 66, 0.8); color: #e4e4e4; text-align: center; line-height: 26px; font-size: 14px; }
```
